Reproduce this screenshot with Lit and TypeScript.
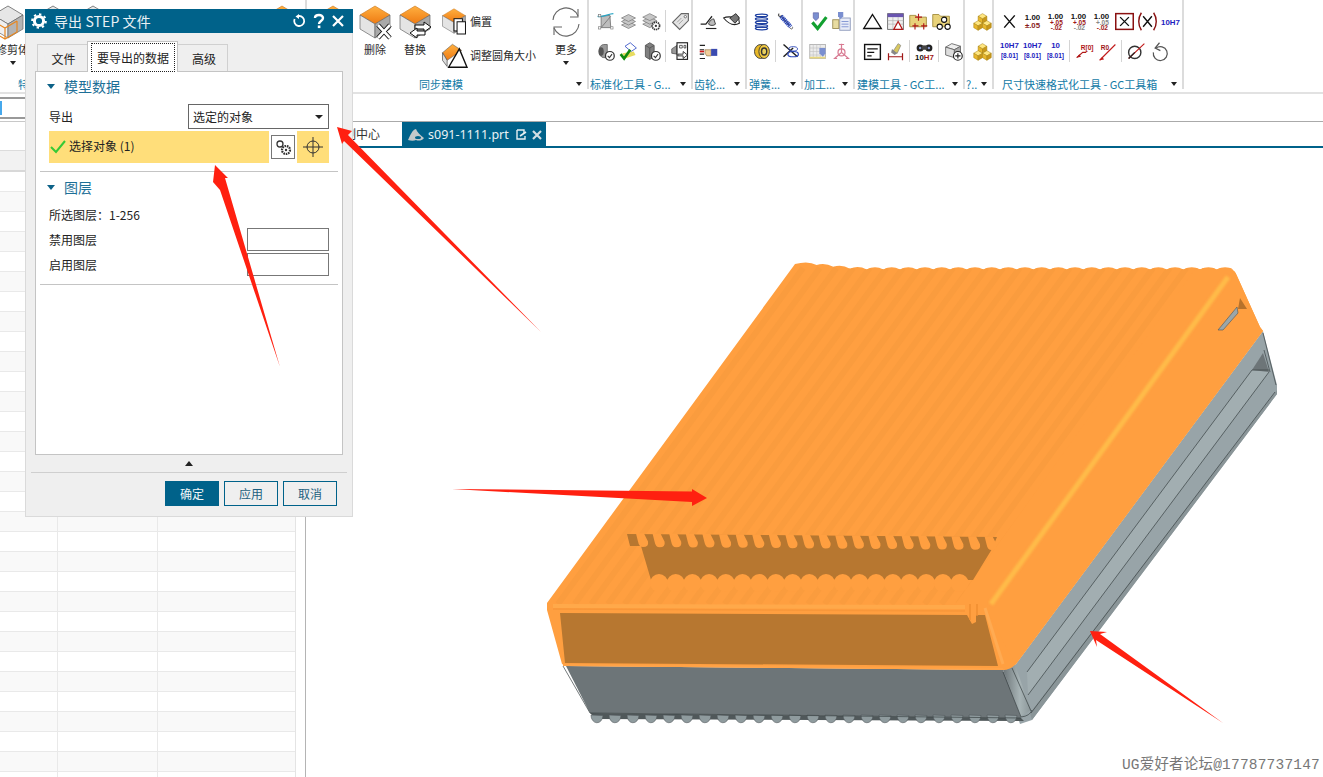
import { LitElement, html, css, svg } from "lit";
import { customElement } from "lit/decorators.js";

const cube = () => svg`
  <polygon points="17,1 32,10 17,19 2,10" fill="url(#og)" stroke="#c8741c" stroke-width=".6"/>
  <polygon points="2,10 17,19 17,33 2,24" fill="#e4e4e4" stroke="#666" stroke-width=".7"/>
  <polygon points="32,10 17,19 17,33 32,24" fill="#a9a9a9" stroke="#666" stroke-width=".7"/>`;

const greyCube = () => svg`
  <polygon points="17,1 32,10 17,19 2,10" fill="#e6e6e6" stroke="#666" stroke-width=".8"/>
  <polygon points="2,10 17,19 17,33 2,24" fill="#f0f0f0" stroke="#666" stroke-width=".7"/>
  <polygon points="32,10 17,19 17,33 32,24" fill="#b4b4b4" stroke="#666" stroke-width=".7"/>`;

const stack = (a: string, b: string, c = "#8a1c1c", d = "#111") => svg`
  <text x="12" y="10" class="st" fill=${d}>${a}</text>
  <text x="12" y="19" class="st" fill=${c}>${b}</text>`;

const tol = (c1: string, c2: string) => svg`
  <text x="12" y="9" class="st" fill="#111">1.00</text>
  <text x="13" y="15.5" class="sm" fill=${c1}>+.05</text>
  <text x="13" y="22" class="sm" fill=${c2}>-.02</text>`;

const block = (n: string) => svg`
  <text x="12" y="8" class="st" fill="#1c1cc0">${n}</text>
  <text x="12" y="19" class="sm" fill="#1c1cc0">[8.01]</text>`;

const check = svg`<circle cx="17" cy="17" r="5" fill="#fff" stroke="#333" stroke-width="1.4"/><path d="M14.5 17l2 2 3-4" fill="none" stroke="#333" stroke-width="1.2"/>`;

const cubes = svg`
  <g stroke="#a98412" stroke-width=".6">
  <polygon points="12,3 17,6 12,9 7,6" fill="#ffe680"/><polygon points="7,6 12,9 12,14 7,11" fill="#e8b62c"/><polygon points="17,6 12,9 12,14 17,11" fill="#c9971a"/>
  <polygon points="7,11 12,14 7,17 2,14" fill="#ffe680"/><polygon points="2,14 7,17 7,22 2,19" fill="#e8b62c"/><polygon points="12,14 7,17 7,22 12,19" fill="#c9971a"/>
  <polygon points="17,11 22,14 17,17 12,14" fill="#ffe680"/><polygon points="12,14 17,17 17,22 12,19" fill="#e8b62c"/><polygon points="22,14 17,17 17,22 22,19" fill="#c9971a"/></g>`;

const layer = (y: number) => svg`<polygon points=${`12,${y} 20,${y + 4} 12,${y + 8} 4,${y + 4}`} fill="#c6c6c6" stroke="#777" stroke-width=".8"/>`;

const gearS = (x: number, y: number) => svg`<circle cx=${x} cy=${y} r="4.2" fill="#fff" stroke="#333" stroke-width="2" stroke-dasharray="1.6 .8"/><circle cx=${x} cy=${y} r="1.3" fill="#333"/>`;

const ICONS: Record<string, unknown> = {
  surf: svg`<polygon points="7,6 17,5 18,19 7,19" fill="#bdbdbd" stroke="#777"/><path d="M7 19L18 6" stroke="#777" fill="none"/><path d="M3 6C9 8 15 3 21 3" stroke="#27a4c4" stroke-width="1.6" fill="none"/><rect x="4" y="18" width="2.6" height="2.6" fill="#fff" stroke="#777" stroke-width=".7"/><rect x="18" y="18" width="2.6" height="2.6" fill="#fff" stroke="#777" stroke-width=".7"/><rect x="4" y="4" width="2.6" height="2.6" fill="#fff" stroke="#777" stroke-width=".7"/>`,
  layers: svg`${layer(12)}${layer(8)}${layer(4)}`,
  layersGear: svg`<g transform="translate(-2 0)">${layer(11)}${layer(7)}${layer(3)}</g>${gearS(17, 17)}`,
  tag: svg`<path d="M3 13L13 3H21V11L11 21Z" fill="#e4e4e4" stroke="#666" stroke-width="1.3"/><circle cx="17.5" cy="6.5" r="1.4" fill="#fff" stroke="#666"/><path d="M8 13l5-5M10 15l5-5" stroke="#999"/>`,
  cylCheck: svg`<path d="M10 4C3 4 3 19 10 19H14V4Z" fill="#9a9a9a" stroke="#666"/><ellipse cx="7" cy="12" rx="3" ry="5" fill="#555"/>${check}`,
  greenCheck: svg`<polygon points="8,6 14,2 21,8 15,12" fill="#fff" stroke="#3a56c8"/><polygon points="5,14 18,12 20,16 8,20" fill="#e8dc60"/><path d="M3 15l4 5L14 10" fill="none" stroke="#108a10" stroke-width="3"/>`,
  boxCheck: svg`<path d="M5 5L10 2 15 5V18L10 21 5 18Z" fill="#808080" stroke="#555"/><path d="M5 5L10 8 15 5M10 8V21" stroke="#555" fill="none"/>${check}`,
  docArrow: svg`<polygon points="2,9 8,5 8,15 2,14" fill="#999" stroke="#444" stroke-width=".8"/><rect x="8" y="2" width="12" height="19" fill="#fff" stroke="#222" stroke-width="1.3"/><path d="M11 5h3v3h-3zM16 5h2v3h-2z" fill="none" stroke="#222" stroke-width=".8"/><path d="M9 15h6v-3l5 4-5 4v-3H9Z" fill="#fff" stroke="#222"/>`,
  curve1: svg`<path d="M3 15H9L16 6" fill="none" stroke="#222" stroke-width="1.4"/><path d="M9 20H21" stroke="#222" stroke-width="1.3"/><path d="M12 15C14 9 18 9 18 9L20 15C18 17 14 17 12 15Z" fill="#bbb" stroke="#333"/>`,
  curve2: svg`<path d="M3 8C8 14 14 18 21 14L20 7C14 8 8 5 3 8Z" fill="#fff" stroke="#222" stroke-width="1.2"/><path d="M10 8L17 3 21 8 16 14Z" fill="#777" stroke="#222"/>`,
  hand: svg`<path d="M2 5h6M2 10h5M2 15h5M2 20h6" stroke="#222" stroke-width="1.2"/><rect x="2" y="11" width="5" height="2" fill="#d01818"/><path d="M8 10h7v7H10L8 14Z" fill="#f0cf9c" stroke="#8a6a3c" stroke-width=".7"/><rect x="15" y="9" width="7" height="8" fill="#3a4ab0"/>`,
  coil: svg`<g fill="none" stroke="#1c3ea0" stroke-width="1.5"><ellipse cx="12" cy="5" rx="7" ry="1.5"/><ellipse cx="12" cy="9" rx="7" ry="1.5"/><ellipse cx="12" cy="13" rx="7" ry="1.5"/><ellipse cx="12" cy="17" rx="7" ry="1.5"/><ellipse cx="12" cy="20" rx="7" ry="1.5"/></g>`,
  spring: svg`<path d="M6 3C3 6 8 7 9 5M9 7l8 9" stroke="#555" fill="none" stroke-width="1.3"/><path d="M8 6L19 18" stroke="#2a46b8" stroke-width="5" stroke-dasharray="1.6 .6"/><path d="M18 19c2 3 4 1 3-1" stroke="#555" fill="none"/>`,
  ring: svg`<ellipse cx="11" cy="12" rx="7" ry="8" fill="#e8b828" stroke="#333"/><ellipse cx="15" cy="12" rx="6" ry="8" fill="#f0c840" stroke="#333"/><ellipse cx="15" cy="12" rx="3" ry="4" fill="#e8d060" stroke="#333" stroke-width="1.6"/>`,
  scissor: svg`<path d="M4 4L20 18M4 18L15 8" stroke="#222" stroke-width="1.7"/><ellipse cx="15" cy="15" rx="6" ry="3" fill="none" stroke="#2a46b8" stroke-width="1.4"/><ellipse cx="15" cy="9" rx="5" ry="2.5" fill="none" stroke="#2a46b8"/>`,
  vcheck: svg`<path d="M6 2h6v6l-3 3-3-3Z" fill="#7a8fd0" stroke="#5a5aa0" stroke-width=".7"/><path d="M5 13l6 7L21 7" fill="none" stroke="#12a030" stroke-width="3.6"/>`,
  doc2: svg`<rect x="10" y="8" width="12" height="14" fill="#e8ecf8" stroke="#8a96b8"/><path d="M12 12h8M12 15h8M12 18h8" stroke="#7a8fd0"/><path d="M8 1h6v5l-3 3-3-3Z" fill="#7a8fd0"/><rect x="2" y="10" width="7" height="10" fill="#e8dca0" stroke="#998a50"/>`,
  gridpin: svg`<rect x="2" y="4" width="18" height="16" fill="#ececec" stroke="#b0b0b0"/><path d="M2 8h18M2 12h18M2 16h18M6 4v16M10 4v16M14 4v16" stroke="#c0c0c0" stroke-width=".7"/><rect x="2" y="18" width="18" height="2" fill="#e8d880"/><path d="M13 8h7v6l-3 4-4-4Z" fill="#7a8fd0"/>`,
  tripod: svg`<circle cx="12" cy="13" r="4" fill="none" stroke="#d87a92" stroke-width="1.4"/><path d="M12 3V13L4 20M12 13L20 20M3 20h4M17 20h4M9 4h6" stroke="#d87a92" stroke-width="1.4" fill="none"/>`,
  triangle: svg`<polygon points="12,4 22,20 2,20" fill="none" stroke="#111" stroke-width="1.6"/>`,
  tableTri: svg`<rect x="3" y="3" width="18" height="18" fill="#f0f0f0" stroke="#666"/><rect x="3" y="3" width="18" height="4" fill="#6a55b0"/><path d="M3 11h18M3 15h18M9 7v14M15 7v14" stroke="#aaa" stroke-width=".7"/><polygon points="15,12 20,21 10,21" fill="#fff" stroke="#b01818" stroke-width="1.4"/>`,
  folderPlus: svg`<path d="M2 5h7l2 2h10v11H2Z" fill="#e8d27a" stroke="#a08a3a"/><path d="M12 3v8M8 7h8M8 14v7M5 17h7M18 14v7M15 17h7" stroke="#b01818" stroke-width="1.3"/>`,
  folderCircle: svg`<path d="M2 4h7l2 2h10v12H2Z" fill="#e8d27a" stroke="#a08a3a"/><g fill="#fff" stroke="#111" stroke-width="1.2"><circle cx="15" cy="10" r="3"/><circle cx="10" cy="18" r="3"/><circle cx="19" cy="18" r="3"/></g>`,
  note: svg`<rect x="3" y="4" width="18" height="17" fill="#fff" stroke="#111" stroke-width="1.6"/><path d="M6 9h12M6 13h8M6 17h5" stroke="#111" stroke-width="1.2"/>`,
  brush: svg`<path d="M4 14V22M20 14V22M4 18H20" stroke="#a01818" stroke-width="1.4"/><path d="M9 12L15 3l3 2-4 9Z" fill="#d8c860" stroke="#777" stroke-width=".7"/><path d="M8 9l6 5-3 2-4-3Z" fill="#888"/>`,
  binoc: svg`<circle cx="7" cy="8" r="4" fill="#222"/><circle cx="17" cy="8" r="4" fill="#222"/><rect x="9" y="5" width="6" height="5" fill="#444"/><circle cx="7" cy="8" r="1.4" fill="#8a9ad0"/><circle cx="17" cy="8" r="1.4" fill="#8a9ad0"/><text x="12" y="22" class="st" fill="#111">10<tspan fill="#a01818">H7</tspan></text>`,
  boxPlus: svg`<polygon points="3,7 10,3 20,6 13,10" fill="#eee" stroke="#666"/><polygon points="3,7 13,10 13,19 3,16" fill="#ddd" stroke="#666"/><polygon points="20,6 13,10 13,19 20,15" fill="#aaa" stroke="#666"/><circle cx="17" cy="17" r="5" fill="#fff" stroke="#222" stroke-width="1.3"/><path d="M14 17h6M17 14v6" stroke="#222" stroke-width="1.3"/>`,
  cubes,
  x: svg`<path d="M6 5L18 19M18 5L6 19" stroke="#111" stroke-width="1.7"/>`,
  d1: stack("1.00", "±.05"),
  d2: tol("#a01818", "#a01818"),
  d3: tol("#a01818", "#888"),
  d4: tol("#888", "#a01818"),
  bx: svg`<rect x="2" y="3" width="20" height="18" fill="none" stroke="#8a1010" stroke-width="1.7"/><path d="M7 7L17 17M17 7L7 17" stroke="#111" stroke-width="1.6"/>`,
  px: svg`<path d="M5 2C1 8 1 16 5 22M19 2C23 8 23 16 19 22" fill="none" stroke="#8a1010" stroke-width="1.6"/><path d="M7 6L17 18M17 6L7 18" stroke="#111" stroke-width="1.6"/>`,
  h7: svg`<text x="12" y="16" class="st" fill="#1c1cc0">10H7</text>`,
  b1: block("10H7"),
  b2: block("10H7"),
  b3: block("10"),
  r1: svg`<path d="M3 19L10 13H14" fill="none" stroke="#b01818" stroke-width="1.3"/><path d="M3 19l5-1-2-3Z" fill="#b01818"/><text x="15" y="10" class="sm" fill="#b01818">R[0]</text>`,
  r2: svg`<path d="M3 22L21 4" stroke="#c01818" stroke-width="1.3"/><path d="M3 22l5-1-2-3Z" fill="#c01818"/><text x="9" y="10" class="sm" fill="#a01818">R0</text>`,
  comp: svg`<circle cx="10" cy="13" r="7" fill="none" stroke="#333" stroke-width="1.6"/><path d="M3 20L21 3" stroke="#c01818" stroke-width="1.2"/><path d="M3 20L10 13" stroke="#222" stroke-width="1.6"/>`,
  undo: svg`<path d="M8 8A8 8 0 1 1 5 13" fill="none" stroke="#555" stroke-width="1.4"/><path d="M12 2L7 8l6 3" fill="none" stroke="#555" stroke-width="1.4"/>`,
};

type Group = { w: number; pad: number; lab: number; label: string; rows: string[][] };
const GROUPS: Group[] = [
  { w: 104, pad: 4.5, lab: 1, label: "标准化工具 - G...", rows: [["surf", "layers", "layersGear", "|", "tag"], ["cylCheck", "greenCheck", "boxCheck", "|", "docArrow"]] },
  { w: 54, pad: 3.5, lab: 1, label: "齿轮...", rows: [["curve1", "curve2"], ["hand"]] },
  { w: 56, pad: 2.5, lab: 2, label: "弹簧...", rows: [["coil", "spring"], ["ring", "|", "scissor"]] },
  { w: 52, pad: 3.5, lab: 1, label: "加工...", rows: [["vcheck", "doc2"], ["gridpin", "tripod"]] },
  { w: 110, pad: 5.5, lab: 2, label: "建模工具 - GC工...", rows: [["triangle", "tableTri", "folderPlus", "folderCircle"], ["note", "brush", "|", "binoc", "|", "boxPlus"]] },
  { w: 29, pad: 5.5, lab: 1, label: "?..", rows: [["cubes"], ["cubes"]] },
  { w: 190, pad: 3.5, lab: 8, label: "尺寸快速格式化工具 - GC工具箱", rows: [["x", "d1", "d2", "d3", "d4", "bx", "px", "h7"], ["b1", "b2", "b3", "|", "r1", "r2", "|", "comp", "undo"]] },
];

@customElement("app-root")
export class AppRoot extends LitElement {
  static styles = css`
    :host { display: block; width: 1323px; height: 777px; position: relative; overflow: hidden; background: #fff; font-family: "Noto Sans CJK SC", "Liberation Sans", sans-serif; font-size: 12px; color: #222; }
    .ribbon { height: 94px; box-sizing: border-box; border-bottom: 2px solid #e2e2e2; display: flex; }
    .group { height: 89px; padding-top: 5px; box-sizing: border-box; border-right: 2px solid #dcdcdc; display: flex; flex-direction: column; flex: none; }
    .body { height: 72px; flex: none; box-sizing: border-box; padding-top: 1px; }
    .row { display: flex; height: 30px; }
    .cell { width: 23px; height: 30px; display: flex; align-items: center; justify-content: center; flex: none; }
    .cell svg { width: 21px; height: 21px; overflow: visible; }
    .st { font: bold 9px "Liberation Sans", sans-serif; text-anchor: middle; }
    .sm { font: bold 7.5px "Liberation Sans", sans-serif; text-anchor: middle; }
    .sep { width: 6px; height: 30px; display: flex; justify-content: center; flex: none; padding: 4px 0; box-sizing: border-box; }
    .sep i { display: block; width: 1px; background: #d4d4d4; }
    .glabel { height: 14px; flex: none; display: flex; align-items: center; font-size: 11px; line-height: 14px; color: #127aa6; white-space: nowrap; }
    .caret { margin-left: auto; margin-right: 5px; width: 0; height: 0; border: 3.5px solid transparent; border-top: 4px solid #222; border-bottom: 0; flex: none; }
    .big-area { display: flex; height: 72px; flex: none; }
    .tile { width: 40px; flex: none; display: flex; flex-direction: column; align-items: center; font-size: 11px; line-height: 14px; white-space: nowrap; color: #2a2a2a; }
    .tile svg { width: 34px; height: 34px; overflow: visible; flex: none; }
    .tile span { margin-top: 3px; }
    .tile.first { width: 25px; margin-right: 8px; }
    .tile.first svg { margin-left: -9px; }
    .tile .tcaret { margin-top: 5px; width: 0; height: 0; border: 3.5px solid transparent; border-top: 4px solid #222; border-bottom: 0; }
    .gap-a { width: 149px; flex: none; }
    .gap-b { width: 6px; flex: none; }
    .gap-c { width: 2px; flex: none; }
    .gap-d { width: 6px; flex: none; }
    .smalls { width: 105px; flex: none; display: flex; flex-direction: column; gap: 8px; padding-top: 3px; box-sizing: border-box; }
    .small { display: flex; align-items: center; gap: 3px; font-size: 11px; height: 26px; white-space: nowrap; color: #2a2a2a; }
    .small svg { width: 26px; height: 26px; overflow: visible; flex: none; }
    .feature-label { padding-left: 18px; }
    .sync-label { padding-left: 112px; }
    .main { display: flex; height: 683px; }
    .left { width: 306px; flex: none; box-sizing: border-box; border-right: 1px solid #b4b4b4; padding-top: 3px; }
    .search { height: 22px; box-sizing: border-box; border-top: 2px solid #999; border-bottom: 2px solid #999; width: 100%; position: relative; }
    .search b { display: block; position: absolute; left: 0; top: 2px; width: 2px; height: 14px; background: #46a8ec; }
    .ruler { height: 1px; background: #c8c8c8; margin-top: 2px; }
    .table { margin-top: 28px; width: 295px; border-right: 1px solid #e4e4e4; box-sizing: content-box; }
    .thead { height: 22px; box-sizing: border-box; background: #f2f2f2; border-top: 1px solid #dcdcdc; border-bottom: 2px solid #d8d8d8; }
    .tr { display: grid; grid-template-columns: 58px 100px 1fr; height: 20px; box-sizing: border-box; border-bottom: 1px solid #e9e9e9; }
    .tr.alt { background: #f9f9f9; }
    .tr div { border-right: 1px solid #e9e9e9; }
    .tr div:last-child { border-right: 0; }
    .right { flex: 1; display: flex; flex-direction: column; min-width: 0; }
    .tabs-top { height: 27px; }
    .strip { height: 27px; box-sizing: border-box; border-top: 1px solid #aaa; border-bottom: 2px solid #00628a; display: flex; align-items: stretch; }
    .strip .tab0 { margin-left: 38px; width: 58px; line-height: 24px; color: #333; white-space: nowrap; }
    .tab1 { background: #00628a; width: 144px; display: flex; align-items: center; color: #eaf2f5; font: 12.5px "Noto Sans", sans-serif; padding-left: 6px; box-sizing: border-box; margin-bottom: -1px; }
    .tab1 svg { flex: none; }
    .tab1 .fname { margin: 0 7px 0 4px; }
    .tab1 .close { margin-left: 5px; }

    .canvas { position: absolute; left: 0; top: 0; width: 1323px; height: 777px; pointer-events: none; }
    .watermark { position: absolute; right: 3px; top: 755px; font: 14.5px/20px "Liberation Mono", "Noto Sans CJK SC", monospace; color: #777; white-space: nowrap; letter-spacing: .2px; }

    .dialog { position: absolute; left: 25px; top: 9px; width: 328px; height: 508px; box-sizing: border-box; background: #efefef; border: 1px solid #dadada; border-top: 0; display: flex; flex-direction: column; }
    .title { height: 24px; background: #00628a; color: #e9f1f5; display: flex; align-items: center; font-size: 14px; padding: 0 9px 0 6px; gap: 7px; flex: none; margin: 0 -1px; }
    .title .t { flex: 1; white-space: nowrap; letter-spacing: .1px; }
    .title .ctl { display: flex; align-items: center; gap: 7px; }
    .tabs { display: flex; margin: 8px 0 0 11px; height: 30px; align-items: flex-end; position: relative; z-index: 1; flex: none; }
    .dtab { height: 27px; box-sizing: border-box; border: 1px solid #d0d0d0; border-bottom: 0; text-align: center; line-height: 28px; color: #222; background: #efefef; width: 51px; padding-left: 2px; }
    .dtab.last { padding-left: 3px; }
    .dtab.on { height: 31px; width: 91px; background: #fff; border-color: #c4c4c4; margin: 0 -1px -1px; padding: 1px 2px 1px 3px; position: relative; }
    .dtab.on span { display: block; height: 27px; line-height: 27px; border: 1px dotted #222; }
    .panel { margin-left: 9px; width: 308px; height: 384px; box-sizing: border-box; background: #fff; border: 1px solid #c4c4c4; flex: none; padding: 0 4px; }
    .sec { display: flex; align-items: center; font-size: 14px; color: #1d6f97; height: 20px; padding-left: 7px; gap: 9px; line-height: 20px; }
    .sec.a { margin-top: 4px; }
    .sec.b { margin-top: 5px; }
    .tri { width: 0; height: 0; border: 4px solid transparent; border-top: 5px solid #0d6288; border-bottom: 0; flex: none; }
    .frow { display: flex; align-items: center; justify-content: space-between; padding: 0 9px; margin-top: 8px; }
    .frow .sel { width: 141px; height: 25px; box-sizing: border-box; border: 1px solid #666; display: flex; align-items: center; justify-content: space-between; padding: 0 5px 0 4px; background: #fff; }
    .sel i { width: 0; height: 0; border: 4px solid transparent; border-top: 4px solid #222; border-bottom: 0; }
    .pick { display: flex; margin: 2px 9px 0; height: 32px; }
    .pick .y { flex: none; width: 220px; background: #ffde7a; display: flex; align-items: center; gap: 3px; padding: 0 0 3px 1px; box-sizing: border-box; }
    .pick .b1 { width: 24px; height: 24px; margin: 4px 2px; box-sizing: border-box; border: 1px solid #777; background: #fff; display: flex; align-items: center; justify-content: center; flex: none; }
    .pick .b2 { width: 32px; height: 32px; background: #ffde7a; display: flex; align-items: center; justify-content: center; flex: none; }
    .hr { height: 1px; background: #c4c4c4; margin-top: 8px; }
    .txt { padding: 0 9px; line-height: 18px; height: 18px; margin-top: 9px; }
    .inrow { display: flex; justify-content: space-between; align-items: center; padding: 0 9px; height: 23px; margin-top: 2px; }
    .inrow.f { margin-top: 4px; }
    .inrow i { display: block; width: 82px; height: 23px; box-sizing: border-box; border: 1px solid #777; background: #fff; }
    .grip { height: 17px; display: flex; justify-content: center; align-items: center; flex: none; }
    .grip i { width: 0; height: 0; border: 4.5px solid transparent; border-bottom: 5px solid #222; border-top: 0; }
    .fline { height: 1px; background: #cfcfcf; margin: 0 5px; flex: none; }
    .foot { display: flex; justify-content: flex-end; gap: 5px; padding: 8px 15px 0 0; }
    .btn { width: 54px; height: 25px; box-sizing: border-box; border: 1px solid #00628a; text-align: center; line-height: 23px; color: #1c5f80; }
    .btn.pri { background: #00628a; color: #f1f6f8; }
  `;

  render() {
    const rows = Array.from({ length: 31 }, (_, i) => i);
    return html`
      <div class="ribbon">
        <div class="group" style="width:307px">
          <div class="big-area">
            <div class="tile first"><svg viewBox="0 0 34 34">${this.defs()}${greyCube()}<path d="M2 16l12 7 12-7M2 16v11l12 7 12-7V16M14 23v11" fill="none" stroke="#e8861e" stroke-width="1.2"/></svg><span>修剪体</span><i class="tcaret"></i></div>
            <div class="tile"><svg viewBox="0 0 34 34">${greyCube()}</svg></div>
            <div class="tile"><svg viewBox="0 0 34 34">${greyCube()}</svg></div>
            <div class="gap-a"></div>
            <div class="tile"><svg viewBox="0 0 34 34">${cube()}</svg></div>
          </div>
          <div class="glabel feature-label">特征</div>
        </div>
        <div class="group" style="width:282px">
          <div class="big-area">
            <div class="gap-d"></div>
            <div class="tile"><svg viewBox="0 0 34 34">${cube()}</svg></div>
            <div class="gap-c"></div>
            <div class="tile"><svg viewBox="0 0 34 34">${cube()}<path d="M20 20L32 33M32 20L20 33" stroke="#111" stroke-width="4.5"/><path d="M20 20L32 33M32 20L20 33" stroke="#fff" stroke-width="2.6"/></svg><span>删除</span></div>
            <div class="tile"><svg viewBox="0 0 34 34">${cube()}<path d="M17 20h9v-3l7 5-7 5v-3h-9Z" fill="#fff" stroke="#111"/><path d="M27 26h-8v-3l-7 5 7 5v-3h8Z" fill="#fff" stroke="#111"/></svg><span>替换</span></div>
            <div class="gap-b"></div>
            <div class="smalls">
              <div class="small"><svg viewBox="0 0 34 34">${cube()}<rect x="17" y="14" width="11" height="16" fill="#fff" stroke="#111" stroke-width="1.3"/><rect x="21" y="18" width="11" height="16" fill="#fff" stroke="#111" stroke-width="1.3"/></svg><span>偏置</span></div>
              <div class="small"><svg viewBox="0 0 34 34"><polygon points="15,3 27,11 8,24 2,14" fill="url(#og)" stroke="#555" stroke-width=".7"/><polygon points="2,14 8,24 8,32 2,24" fill="#ddd" stroke="#555"/><polygon points="24,9 34,33 10,33" fill="#fff" stroke="#111" stroke-width="1.8"/></svg><span>调整圆角大小</span></div>
            </div>
            <div class="tile">
              <svg viewBox="0 0 34 34"><path d="M4 15A13 13 0 0 1 29 11M30 19A13 13 0 0 1 5 23" fill="none" stroke="#666" stroke-width="1.1"/><path d="M29 4V12H21M5 30V22H13" fill="none" stroke="#666" stroke-width="1.1"/></svg>
              <span>更多</span><i class="tcaret"></i>
            </div>
          </div>
          <div class="glabel sync-label">同步建模<i class="caret"></i></div>
        </div>
        ${GROUPS.map((g) => html`
          <div class="group" style="width:${g.w}px">
            <div class="body" style="padding-left:${g.pad}px">
              ${g.rows.map((r) => html`<div class="row">${r.map((n) => n === "|"
                ? html`<div class="sep"><i></i></div>`
                : html`<div class="cell"><svg viewBox="0 0 24 24">${ICONS[n]}</svg></div>`)}</div>`)}
            </div>
            <div class="glabel" style="padding-left:${g.lab}px">${g.label}<i class="caret"></i></div>
          </div>`)}
      </div>

      <div class="main">
        <div class="left">
          <div class="search"><b></b></div>
          <div class="ruler"></div>
          <div class="table">
            <div class="thead"></div>
            ${rows.map((i) => html`<div class="tr ${i % 2 ? "alt" : ""}"><div></div><div></div><div></div></div>`)}
          </div>
        </div>
        <div class="right">
          <div class="tabs-top"></div>
          <div class="strip">
            <div class="tab0">制中心</div>
            <div class="tab1">
              <svg width="16" height="16" viewBox="0 0 16 16"><path d="M0 13C2 9 4 3 8 2c1 3 4 6 8 9-2 3-6 3-8 2-2 1-5 1-8 0Z" fill="#c4c8ca"/><ellipse cx="10" cy="10.5" rx="3" ry="1.6" fill="#00628a"/></svg>
              <span class="fname">s091-1111.prt</span>
              <svg width="11" height="11" viewBox="0 0 11 11"><path d="M1 1H8V4M9 7V10H1V1" fill="none" stroke="#e8f0f3" stroke-width="1.4"/><path d="M4 7L10 3" stroke="#e8f0f3" stroke-width="1.6"/></svg>
              <svg class="close" width="10" height="10" viewBox="0 0 10 10"><path d="M1 1L9 9M9 1L1 9" stroke="#d4dfe4" stroke-width="2.2"/></svg>
            </div>
          </div>
        </div>
      </div>

      ${this.model()}
      <div class="watermark">UG爱好者论坛@17787737147</div>
      ${this.dialog()}
      <svg class="canvas" viewBox="0 0 1323 777">
        <g fill="#ff2010">
          <polygon points="337,127 352,131 348,135 541,332 344,141 342,144"/>
          <polygon points="215,165 228,178 225,178 280,367 220,190 213,182"/>
          <polygon points="452,489 692,491.5 692,489 707,498 692,506 692,502"/>
          <polygon points="1090,631 1107,632 1100,634 1223,723 1096,640 1097,647"/>
        </g>
      </svg>
    `;
  }

  defs() {
    return svg`<defs><linearGradient id="og" x1="0" y1="0" x2="0" y2="1"><stop offset="0" stop-color="#ffb040"/><stop offset="1" stop-color="#ee7a12"/></linearGradient></defs>`;
  }

  model() {
    const P = 16.67;
    const top: string[] = ["M547 603 L795 264"];
    for (let x = 800; x < 1225; x += P) {
      const y0 = x < 840 ? 264 + (x - 800) * 0.11 : 268.5;
      top.push(`Q${x + P / 2} ${y0 - 3.5} ${x + P} ${y0 + 1}`);
    }
    top.push("L1230 269 Q1235 270 1237 276 L1260 327 L1263 331 L1016 664 Q1010 670 1003 670 L566 666 L562 664 L547 610 Z");
    const stripes = Array.from({ length: 25 }, (_, i) => 803 + i * P);
    const bulbs = Array.from({ length: 22 }, (_, i) => 632 + i * 16.6);
    const bumps = Array.from({ length: 19 }, (_, i) => 659 + i * 16.7);
    const feet = Array.from({ length: 24 }, (_, i) => 597 + i * 18);
    return html`<svg class="canvas" viewBox="0 0 1323 777">
      <defs>
        <linearGradient id="cg" x1="0" y1="0" x2="1" y2="0"><stop offset="0" stop-color="#6d7578"/><stop offset=".6" stop-color="#a8b4b6"/><stop offset="1" stop-color="#8a9598"/></linearGradient>
        <clipPath id="tc"><path d=${top.join(" ")}/></clipPath>
        <filter id="bl"><feGaussianBlur stdDeviation=".8"/></filter>
      </defs>
      <polygon points="1263,331 1277,385 1277,394 1032,720 1020,724 1003,672 1016,664" fill="#98a4a8"/>
      <polygon points="1252,370 1269,372 1028,695 1027,672" fill="#a2aeb1"/>
      <polygon points="1252,370 1269,372 1263,353" fill="#6d7578"/>
      <polygon points="1277,390 1277,394 1032,720 1030,713" fill="#8a9598"/>
      <polygon points="566,666 590,713 1021,718 1003,670" fill="#6d7578"/>
      <polygon points="1003,670 1015,665 1031,710 1021,716" fill="url(#cg)"/>
      <polygon points="590,713 1021,718 1024,721 596,719" fill="#50585a"/>
      ${feet.map((x) => svg`<path d=${`M${x - 6} 715 A6 7.5 0 0 0 ${x + 6} 715.5 Z`} fill="#8f9b9e" stroke="#50585a" stroke-width=".6"/>`)}
      <g fill="none" stroke="#3a4244" stroke-width=".7">
        <path d="M1252 370L1027 672M1269 372L1028 695M1275 392L1031 713M1263 333L1276 385M1264 350L1270 372M1252 370H1269"/>
        <path d="M563 666L590 713M1003 672L1021 717M1012 668L1031 711M590 713L1021 718"/>
        <path d="M1021 717Q1030 716 1032 710"/>
      </g>
      <path d=${top.join(" ")} fill="#ff9f40"/>
      <g clip-path="url(#tc)">
        ${stripes.map((x) => svg`<line x1=${x} y1="268" x2=${x - 245} y2="604" stroke="#fa9c3e" stroke-width="6"/>`)}
        <polygon points="1196,268 1240,268 1264,330 1016,666 985,606 954,606" fill="#ff9f40"/>
        <line x1="1228" y1="277" x2="991" y2="604" stroke="#ffbb48" stroke-width="5" filter="url(#bl)"/>
      </g>
      <polygon points="627,534 997,537 992,549 973,580 651,580 641,546 630,546" fill="#b77730"/>
      ${bulbs.map((x, i) => {
        const y = 533.5 + i * 0.14;
        return svg`<path d=${`M${x + 4} ${y} L${x + 12} ${y} L${x + 16} ${y + 8} Q${x + 17} ${y + 13.5} ${x + 11} ${y + 13.5} Q${x + 7} ${y + 13.5} ${x + 6} ${y + 8} Z`} fill="#ff9f40"/>`;
      })}
      ${bumps.map((x) => svg`<circle cx=${x} cy="583" r="9" fill="#ff9f40"/>`)}
      <polygon points="560,613 967,615 972,624 976,622 976,615 985,615 998,666 565,663" fill="#b77730"/>
      <path d="M553 606L965 607" stroke="#ffa94a" stroke-width="4"/>
      <path d="M553 609L965 611" stroke="#f8973a" stroke-width="1.5"/>
      <path d="M970 604V620M977 604V616" stroke="#f08e30" stroke-width="1.5"/>
      <path d="M985 608L1003 664" stroke="#ffab52" stroke-width="3"/>
      <path d="M563 665L1003 669" stroke="#ffa347" stroke-width="2"/>
      <polygon points="1240,298 1247,309 1238,309" fill="#b8722a"/>
      <polygon points="1237,307 1238,313 1223,330 1218,330" fill="#9aa6a9" stroke="#4e5658" stroke-width=".6"/>
    </svg>`;
  }

  dialog() {
    return html`<div class="dialog">
      <div class="title">
        <svg width="16" height="16" viewBox="0 0 16 16"><circle cx="8" cy="8" r="4.6" fill="none" stroke="#fff" stroke-width="3"/><circle cx="8" cy="8" r="6.8" fill="none" stroke="#fff" stroke-width="2" stroke-dasharray="2.4 2.9"/></svg>
        <span class="t">导出 STEP 文件</span>
        <span class="ctl">
          <svg width="14" height="14" viewBox="0 0 14 14"><path d="M7 2A5 5 0 1 1 2.6 5" fill="none" stroke="#fff" stroke-width="1.8"/><path d="M7 0V5L3.5 2.5Z" fill="#fff"/></svg>
          <svg width="12" height="16" viewBox="0 0 12 16"><path d="M2 5C2 1 10 1 10 5C10 8 6 8 6 11" fill="none" stroke="#fff" stroke-width="2.4"/><rect x="4.8" y="12.5" width="2.6" height="2.6" fill="#fff"/></svg>
          <svg class="x" width="12" height="12" viewBox="0 0 12 12"><path d="M1 1L11 11M11 1L1 11" stroke="#fff" stroke-width="2.2"/></svg>
        </span>
      </div>
      <div class="tabs">
        <div class="dtab">文件</div>
        <div class="dtab on"><span>要导出的数据</span></div>
        <div class="dtab last">高级</div>
      </div>
      <div class="panel">
        <div class="sec a"><i class="tri"></i>模型数据</div>
        <div class="frow"><span>导出</span><div class="sel"><span>选定的对象</span><i></i></div></div>
        <div class="pick">
          <div class="y">
            <svg width="16" height="16" viewBox="0 0 16 16"><path d="M1 9L6 14L15 3" fill="none" stroke="#36c936" stroke-width="2"/></svg>
            <span>选择对象 (1)</span>
          </div>
          <div class="b1"><svg width="18" height="18" viewBox="0 0 18 18"><circle cx="6" cy="6" r="3" fill="none" stroke="#333" stroke-width="1.3"/><circle cx="12" cy="12" r="4" fill="#fff" stroke="#333" stroke-width="2.2" stroke-dasharray="1.6 .8"/><circle cx="12" cy="12" r="1.2" fill="#333"/></svg></div>
          <div class="b2"><svg width="22" height="22" viewBox="0 0 22 22"><circle cx="11" cy="11" r="6" fill="none" stroke="#333" stroke-width="1"/><path d="M11 1V21M1 11H21" stroke="#333" stroke-width="1"/></svg></div>
        </div>
        <div class="hr"></div>
        <div class="sec b"><i class="tri"></i>图层</div>
        <div class="txt">所选图层：1-256</div>
        <div class="inrow f"><span>禁用图层</span><i></i></div>
        <div class="inrow"><span>启用图层</span><i></i></div>
        <div class="hr"></div>
      </div>
      <div class="grip"><i></i></div>
      <div class="fline"></div>
      <div class="foot">
        <div class="btn pri">确定</div>
        <div class="btn">应用</div>
        <div class="btn">取消</div>
      </div>
    </div>`;
  }
}
